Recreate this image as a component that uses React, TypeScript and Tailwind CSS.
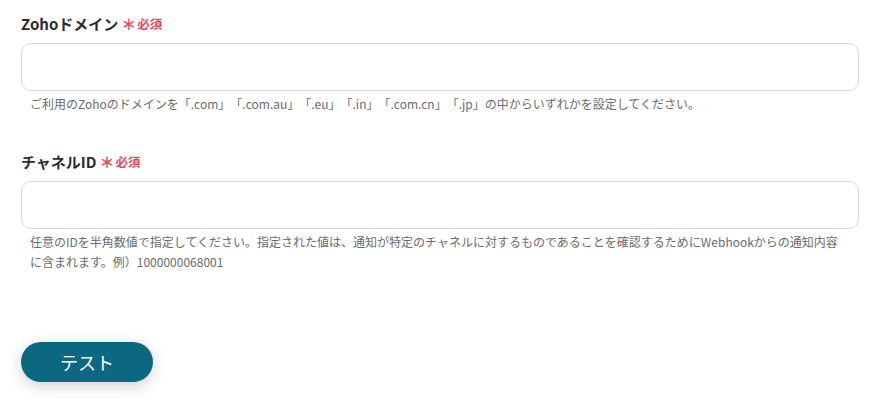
const fontStack = "font-['Noto_Sans_CJK_JP','Noto_Sans',sans-serif]";

const Field = ({ label, help }: { label: string; help: string }) => (
  <div>
    <div className="flex items-center h-[22px]">
      <span className="text-[15px] font-bold text-[#2b2b2b]">{label}</span>
      <span className="ml-[3px] text-[15px] font-bold text-[#e8475a]">＊</span>
      <span className="ml-[1px] text-[12.5px] font-bold text-[#e8475a]">必須</span>
    </div>
    <input
      type="text"
      className="mt-[8px] block w-full h-[48px] rounded-[10px] border border-[#d4d6dc] bg-white px-3 outline-none"
    />
    <p className="mt-[3px] pl-[9px] pr-[12px] text-[12px] leading-[20px] text-[#6b6b6b] [text-spacing-trim:space-all]">{help}</p>
  </div>
);

const App = () => {
  return (
    <div className={`${fontStack} bg-white w-[879px] h-[400px] overflow-hidden px-[21px] pt-[13px]`}>
      <div className="w-[838px]">
        <Field
          label="Zohoドメイン"
          help="ご利用のZohoのドメインを「.com」「.com.au」「.eu」「.in」「.com.cn」「.jp」の中からいずれかを設定してください。"
        />
        <div className="mt-[37px]">
          <Field
            label="チャネルID"
            help="任意のIDを半角数値で指定してください。指定された値は、通知が特定のチャネルに対するものであることを確認するためにWebhookからの通知内容に含まれます。例）1000000068001"
          />
        </div>
      </div>
      <button className="mt-[70px] w-[132px] h-[40px] rounded-full bg-[#0b6880] text-white text-[18px] shadow-[0_4px_16px_rgba(0,0,0,0.18)]">
        テスト
      </button>
    </div>
  );
};

export default App;
